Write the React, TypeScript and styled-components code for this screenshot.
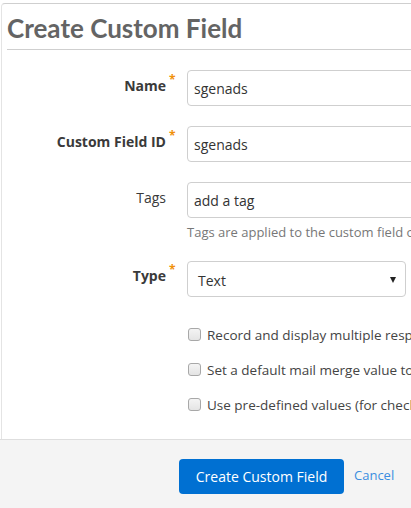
import React from "react";
import styled, { createGlobalStyle } from "styled-components";

const Global = createGlobalStyle`
  html, body { margin: 0; padding: 0; background: #fff; overflow: hidden; }
  body { font-family: "Open Sans", "Liberation Sans", sans-serif; color: #333; }
  * { box-sizing: border-box; }
`;

const Frame = styled.div`
  width: 411px;
  height: 508px;
  display: flex;
  flex-direction: column;
  overflow: hidden;
`;

const Panel = styled.div`
  margin: 3px 0 0 1px;
  border-top: 1px solid #cfcfcf;
  border-left: 1px solid #e4e4e4;
  border-top-left-radius: 4px;
  display: flex;
  flex-direction: column;
  flex: 1;
`;

const Header = styled.div`
  margin: 0 0 0 5px;
  padding: 9px 0 6px 0;
  border-bottom: 1px solid #cfcfcf;
`;

const Title = styled.h1`
  margin: 0;
  font-family: "Lato", "Open Sans", sans-serif;
  font-weight: 700;
  font-size: 26px;
  line-height: 30px;
  color: #646464;
`;

const Form = styled.div`
  display: grid;
  grid-template-columns: 173px 1fr;
  column-gap: 12px;
  row-gap: 20px;
  padding: 20px 0 0 0;
  flex: 1;
  align-items: center;
  align-content: start;
`;

const Label = styled.div<{ $bold?: boolean }>`
  display: flex;
  justify-content: flex-end;
  align-items: flex-start;
  font-size: 14px;
  font-weight: ${(p) => (p.$bold ? 700 : 400)};
  color: #3a3a3a;
  line-height: 20px;
  align-self: start;
  padding-top: 6px;
`;

const Star = styled.span`
  display: inline-block;
  width: 9px;
  padding-left: 3px;
  color: #f0900a;
  font-size: 12px;
  line-height: 12px;
  margin-top: -2px;
  font-weight: 700;
`;

const Field = styled.div`
  display: flex;
  flex-direction: column;
  gap: 6px;
`;

const TextInput = styled.div`
  width: 260px;
  height: 36px;
  border: 1px solid #cfcfcf;
  border-radius: 4px;
  padding: 0 6px;
  display: flex;
  align-items: center;
  font-size: 14px;
  color: #333;
  background: #fff;
`;

const Help = styled.div`
  font-size: 13px;
  line-height: 16px;
  color: #777;
  white-space: nowrap;
`;

const Select = styled.div`
  width: 219px;
  height: 36px;
  margin-top: 1px;
  border: 1px solid #cfcfcf;
  border-radius: 4px;
  padding: 2px 9px 0 10px;
  display: flex;
  align-items: center;
  justify-content: space-between;
  font-size: 14px;
  color: #333;
`;

const Arrow = styled.span`
  width: 0;
  height: 0;
  border-left: 3px solid transparent;
  border-right: 3px solid transparent;
  border-top: 6px solid #222;
`;

const Checks = styled.div`
  grid-column: 2;
  display: flex;
  flex-direction: column;
  gap: 16px;
  margin-top: 8px;
`;

const CheckRow = styled.label`
  display: flex;
  align-items: center;
  gap: 6px;
  font-size: 13.5px;
  color: #444;
  white-space: nowrap;
  height: 19px;
`;

const Box = styled.span`
  width: 13px;
  height: 13px;
  margin-left: 1px;
  border: 1px solid #a8a8a8;
  border-radius: 3px;
  background: linear-gradient(#f4f4f4, #e4e4e4);
  flex: none;
`;

const Footer = styled.div`
  height: 69px;
  background: #f4f4f4;
  border-top: 1px solid #dedede;
  display: flex;
  align-items: flex-start;
  padding: 19px 0 0 179px;
  gap: 10px;
  margin-left: -2px;
`;

const Primary = styled.button`
  width: 165px;
  height: 35px;
  border: none;
  border-radius: 4px;
  background: #0070d2;
  color: #fff;
  font-family: "Open Sans", sans-serif;
  font-size: 14px;
  cursor: pointer;
  padding: 0;
`;

const Link = styled.a`
  font-size: 13px;
  color: #3b8ee0;
  text-decoration: none;
  padding-top: 7px;
`;

export default function App() {
  return (
    <Frame>
      <Global />
      <Panel>
        <Header>
          <Title>Create Custom Field</Title>
        </Header>
        <Form>
          <Label $bold>
            Name<Star>*</Star>
          </Label>
          <TextInput>sgenads</TextInput>

          <Label $bold>
            Custom Field ID<Star>*</Star>
          </Label>
          <TextInput>sgenads</TextInput>

          <Label>
            Tags<Star />
          </Label>
          <Field>
            <TextInput>add a tag</TextInput>
            <Help>Tags are applied to the custom field only</Help>
          </Field>

          <Label $bold>
            Type<Star>*</Star>
          </Label>
          <Select>
            Text
            <Arrow />
          </Select>

          <Checks>
            <CheckRow>
              <Box />
              Record and display multiple responses
            </CheckRow>
            <CheckRow>
              <Box />
              Set a default mail merge value to use
            </CheckRow>
            <CheckRow>
              <Box />
              Use pre-defined values (for checkboxes)
            </CheckRow>
          </Checks>
        </Form>
        <Footer>
          <Primary>Create Custom Field</Primary>
          <Link href="#">Cancel</Link>
        </Footer>
      </Panel>
    </Frame>
  );
}
